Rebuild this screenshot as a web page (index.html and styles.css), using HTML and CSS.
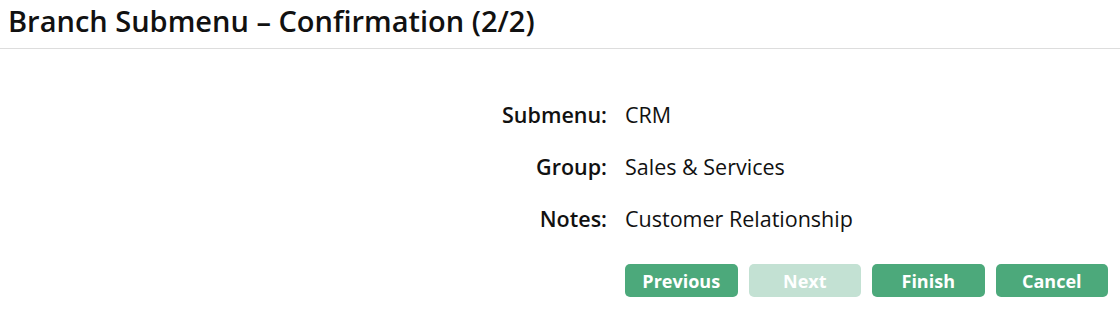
FILE: index.html
```html
<!DOCTYPE html>
<html lang="en">
<head>
  <meta charset="UTF-8" />
  <meta name="viewport" content="width=device-width, initial-scale=1.0"/>
  <title>Branch Submenu</title>
  <link rel="stylesheet" href="styles.css">
</head>
<body>
  <h1 class="page-title">Branch Submenu – Confirmation (2/2)</h1>

  <div class="confirm">
    <div class="label">Submenu:</div>
    <div class="value">CRM</div>

    <div class="label">Group:</div>
    <div class="value">Sales &amp; Services</div>

    <div class="label">Notes:</div>
    <div class="value">Customer Relationship</div>

    <div class="actions">
      <button class="btn">Previous</button>
      <button class="btn" disabled>Next</button>
      <button class="btn">Finish</button>
      <button class="btn">Cancel</button>
    </div>
  </div>
</body>
</html>
```

FILE: styles.css
```css
* {
  box-sizing: border-box;
  font-family: 'Open Sans', 'Noto Sans', sans-serif;
}
body {
  margin: 0;
  background: #fff;
  color: #111;
}
.page-title {
  margin: 0;
  padding: 2px 8px 0 8px;
  height: 49px;
  font-size: 29px;
  font-weight: 600;
  line-height: 38px;
  border-bottom: 1px solid #ddd;
}
.confirm {
  display: grid;
  grid-template-columns: 1fr 483px;
  column-gap: 18px;
  padding: 40px 12px 0 12px;
}
.label,
.value {
  font-size: 21.5px;
  line-height: 52px;
}
.label {
  text-align: right;
  font-weight: 600;
}
.actions {
  grid-column: 2;
  display: flex;
  gap: 11px;
  margin-top: 19px;
}
.btn {
  flex: 1;
  height: 33px;
  padding: 0;
  border: none;
  border-radius: 5px;
  background: #4ca97b;
  color: #fff;
  font-size: 18px;
  font-weight: 700;
  cursor: pointer;
}
.btn:disabled {
  background: #c3e1d3;
  cursor: default;
}
```
